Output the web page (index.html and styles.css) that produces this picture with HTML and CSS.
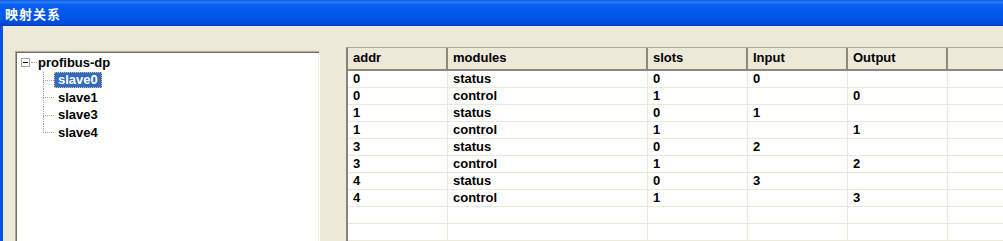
FILE: index.html
```
<!DOCTYPE html>
<html>
<head>
<meta charset="utf-8">
<link rel="stylesheet" href="styles.css">
</head>
<body>
<div class="window">
  <div class="titlebar"><span class="title">映射关系</span></div>
  <div class="client">
    <div class="tree">
      <div class="root-row">
        <span class="expander"><span class="minus"></span></span>
        <span class="stub"></span>
        <span class="label">profibus-dp</span>
      </div>
      <div class="child">
        <span class="conn"><span class="conn-top"></span><span class="conn-bot"></span></span>
        <span class="label selected">slave0</span>
      </div>
      <div class="child">
        <span class="conn"><span class="conn-top"></span><span class="conn-bot"></span></span>
        <span class="label">slave1</span>
      </div>
      <div class="child">
        <span class="conn"><span class="conn-top"></span><span class="conn-bot"></span></span>
        <span class="label">slave3</span>
      </div>
      <div class="child last">
        <span class="conn"><span class="conn-top"></span><span class="conn-bot"></span></span>
        <span class="label">slave4</span>
      </div>
    </div>
    <div class="list">
      <div class="hdr">
        <div class="c">addr</div><div class="c">modules</div><div class="c">slots</div><div class="c">Input</div><div class="c">Output</div><div class="c"></div>
      </div>
      <div class="row"><div class="c">0</div><div class="c">status</div><div class="c">0</div><div class="c">0</div><div class="c"></div><div class="c"></div></div>
      <div class="row"><div class="c">0</div><div class="c">control</div><div class="c">1</div><div class="c"></div><div class="c">0</div><div class="c"></div></div>
      <div class="row"><div class="c">1</div><div class="c">status</div><div class="c">0</div><div class="c">1</div><div class="c"></div><div class="c"></div></div>
      <div class="row"><div class="c">1</div><div class="c">control</div><div class="c">1</div><div class="c"></div><div class="c">1</div><div class="c"></div></div>
      <div class="row"><div class="c">3</div><div class="c">status</div><div class="c">0</div><div class="c">2</div><div class="c"></div><div class="c"></div></div>
      <div class="row"><div class="c">3</div><div class="c">control</div><div class="c">1</div><div class="c"></div><div class="c">2</div><div class="c"></div></div>
      <div class="row"><div class="c">4</div><div class="c">status</div><div class="c">0</div><div class="c">3</div><div class="c"></div><div class="c"></div></div>
      <div class="row"><div class="c">4</div><div class="c">control</div><div class="c">1</div><div class="c"></div><div class="c">3</div><div class="c"></div></div>
      <div class="row"><div class="c"></div><div class="c"></div><div class="c"></div><div class="c"></div><div class="c"></div><div class="c"></div></div>
      <div class="row"><div class="c"></div><div class="c"></div><div class="c"></div><div class="c"></div><div class="c"></div><div class="c"></div></div>
      <div class="row"><div class="c"></div><div class="c"></div><div class="c"></div><div class="c"></div><div class="c"></div><div class="c"></div></div>
    </div>
  </div>
</div>
</body>
</html>
```
FILE: styles.css
```
html, body {
  margin: 0;
  padding: 0;
}
body {
  width: 1003px;
  height: 241px;
  overflow: hidden;
  font-family: "Liberation Sans", Arial, sans-serif;
  font-size: 13px;
  font-weight: bold;
  color: #000;
  background: #ECE9D8;
}
.window {
  display: flex;
  flex-direction: column;
  height: 241px;
}
.titlebar {
  flex: none;
  height: 26px;
  box-sizing: border-box;
  display: flex;
  align-items: center;
  padding: 1px 0 0 5px;
  background: linear-gradient(180deg, #0A5CE6 0%, #2C7CF2 8%, #0B5FEE 18%, #0058EE 45%, #0054E6 75%, #0049D6 90%, #003FC4 100%);
}
.title {
  color: #fff;
  font-family: "Noto Sans CJK SC", "Liberation Sans", sans-serif;
  font-size: 13px;
  font-weight: bold;
  letter-spacing: 1px;
  line-height: 16px;
}
.client {
  flex: 1;
  min-height: 0;
  display: flex;
  align-items: flex-start;
  background: #ECE9D8;
  border-left: 3px solid #0B52E2;
  padding: 21px 0 0 12px;
  overflow: hidden;
}
.tree {
  flex: none;
  width: 305px;
  height: 200px;
  margin-top: 4px;
  box-sizing: border-box;
  background: #fff;
  border: 1px solid;
  border-color: #ACA899 #FFFFFF #FFFFFF #ACA899;
  box-shadow: inset 1px 1px 0 #716F64, inset -1px 0 0 #F1EFE2;
  padding: 2px 0 0 5px;
}
.root-row, .child {
  display: flex;
  align-items: center;
  height: 17.5px;
}
.expander {
  width: 9px;
  height: 9px;
  box-sizing: border-box;
  border: 1px solid #A5A5A5;
  background: #fff;
  display: flex;
  align-items: center;
  justify-content: center;
}
.minus {
  width: 5px;
  height: 1px;
  background: #000;
}
.stub {
  width: 6px;
  margin-left: 1px;
  border-top: 1px dotted #A0A0A0;
}
.root-row .label {
  padding: 0 1px;
}
.child {
  margin-left: 22px;
  align-items: stretch;
}
.conn {
  width: 11px;
  flex: none;
  display: flex;
  flex-direction: column;
}
.conn-top {
  flex: 1;
  border-left: 1px dotted #A0A0A0;
  border-bottom: 1px dotted #A0A0A0;
}
.conn-bot {
  flex: 1;
  border-left: 1px dotted #A0A0A0;
}
.child.last .conn-bot {
  border-left-color: transparent;
}
.label {
  line-height: 14px;
}
.child .label {
  align-self: center;
  height: 16px;
  box-sizing: border-box;
  padding: 0 3px;
  border: 1px solid transparent;
  line-height: 14px;
}
.child .label.selected {
  background: #316AC5;
  color: #fff;
  border: 1px dotted #E2C25E;
}
.list {
  flex: none;
  margin-left: 26px;
  width: 700px;
  height: 200px;
  overflow: hidden;
  background: #fff;
  border-top: 1px solid #ACA899;
  border-left: 2px solid #85837A;
}
.hdr, .row {
  display: grid;
  grid-template-columns: 100px 200px 100px 100px 100px 1fr;
}
.hdr {
  height: 23px;
  box-sizing: border-box;
  background: #ECE9D8;
  border-bottom: 2px solid #8B897D;
}
.hdr .c {
  border-right: 2px solid #8B897D;
  padding-left: 5px;
  line-height: 20px;
}
.hdr .c:last-child {
  border-right: none;
}
.row {
  height: 17px;
  box-sizing: border-box;
  border-bottom: 1px solid #ECE9D8;
}
.row .c {
  border-right: 1px solid #ECE9D8;
  padding-left: 5px;
  line-height: 16px;
}
.row .c:last-child {
  border-right: none;
}
```
